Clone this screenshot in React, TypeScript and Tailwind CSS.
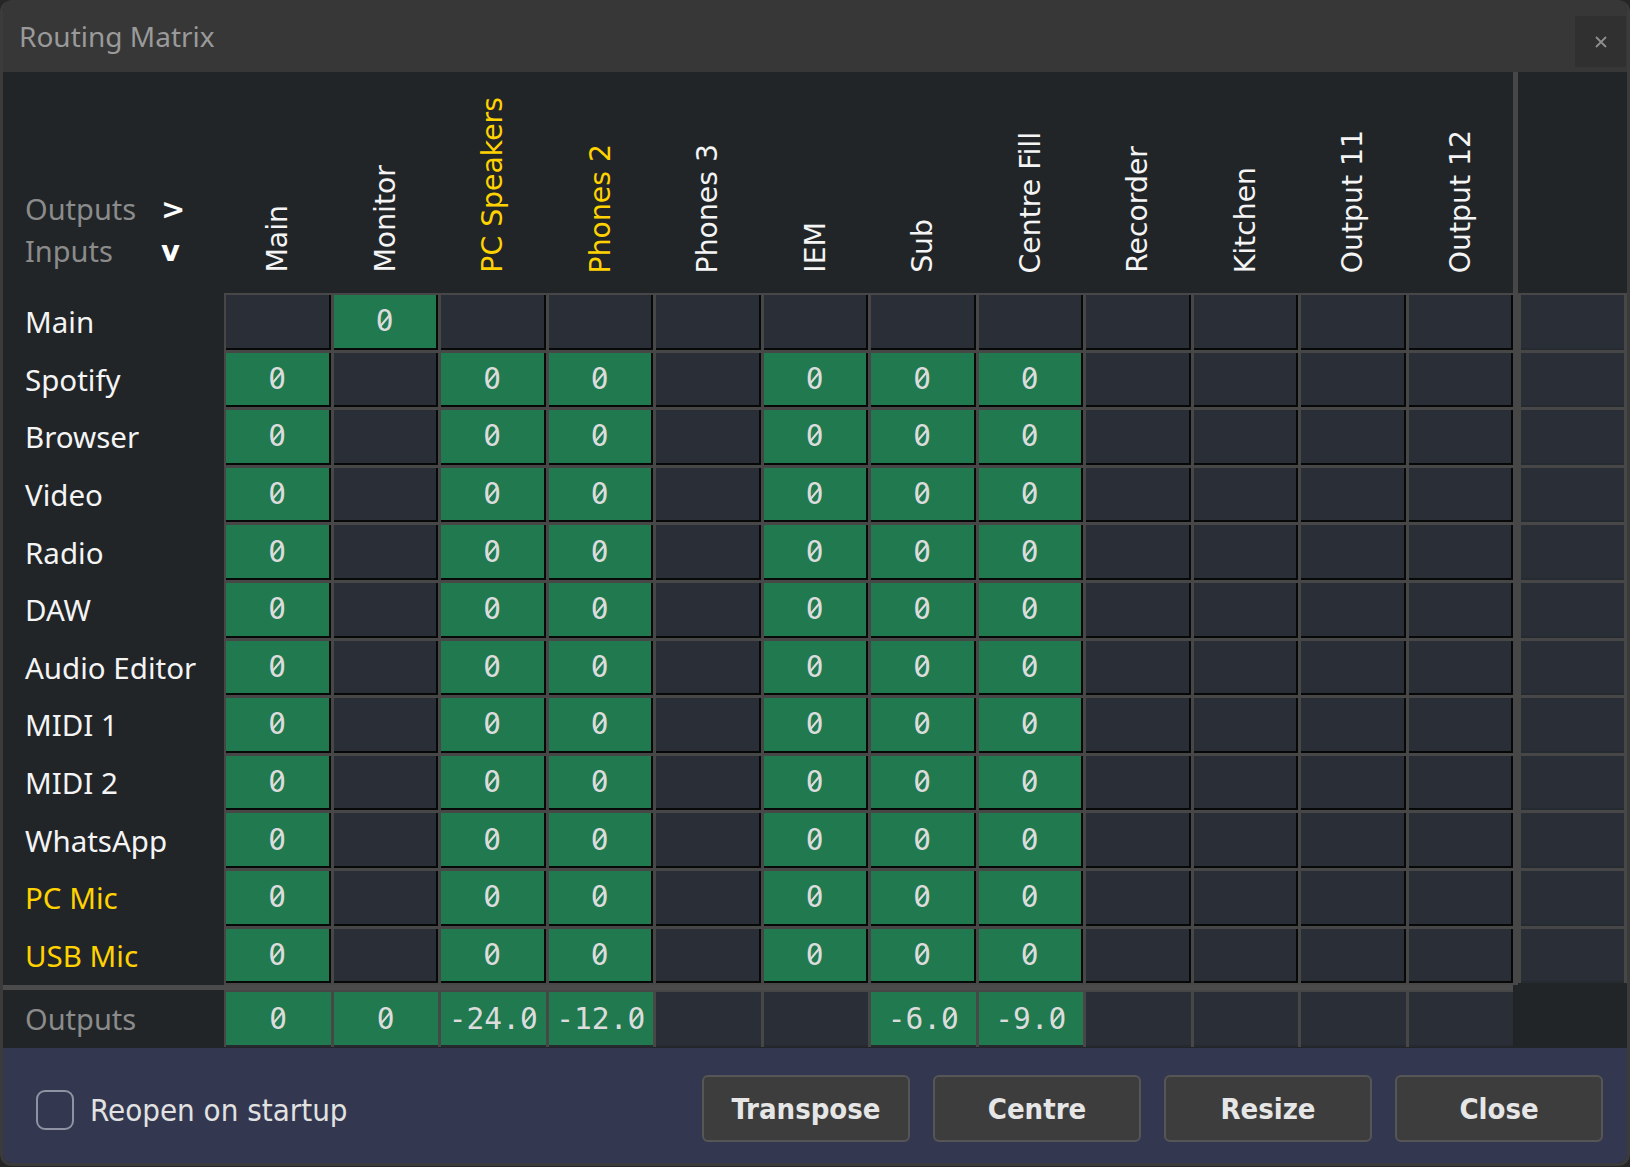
import React from 'react';

type Col = { name: string; hw?: boolean };

const COLS: Col[] = [
  { name: 'Main' },
  { name: 'Monitor' },
  { name: 'PC Speakers', hw: true },
  { name: 'Phones 2', hw: true },
  { name: 'Phones 3' },
  { name: 'IEM' },
  { name: 'Sub' },
  { name: 'Centre Fill' },
  { name: 'Recorder' },
  { name: 'Kitchen' },
  { name: 'Output 11' },
  { name: 'Output 12' },
];

const ROWS: Col[] = [
  { name: 'Main' },
  { name: 'Spotify' },
  { name: 'Browser' },
  { name: 'Video' },
  { name: 'Radio' },
  { name: 'DAW' },
  { name: 'Audio Editor' },
  { name: 'MIDI 1' },
  { name: 'MIDI 2' },
  { name: 'WhatsApp' },
  { name: 'PC Mic', hw: true },
  { name: 'USB Mic', hw: true },
];

// which outputs each input is routed to
const ROUTED = [0, 2, 3, 5, 6, 7];
const OUT_LEVELS = ['0', '0', '-24.0', '-12.0', '', '', '-6.0', '-9.0', '', '', '', ''];

const isRouted = (row: number, col: number) => (row === 0 ? col === 1 : ROUTED.includes(col));

// mono number, zeros drawn slashed like the original
const Num = ({ value }: { value: string }) => (
  <span className="flex font-['DejaVu_Sans_Mono',monospace] text-[29.5px] leading-[34px] text-[#dcdcdc]">
    {value.split('').map((ch, i) =>
      ch === '0' ? (
        <span key={i} className="relative">
          0
          <span className="absolute left-1/2 top-[16.5px] w-[5px] h-[8px] -translate-x-1/2 -translate-y-1/2 bg-[#217a4f]" />
          <span className="absolute left-1/2 top-[16.5px] w-[2.4px] h-[16px] -translate-x-1/2 -translate-y-1/2 rotate-[40deg] bg-[#dcdcdc]" />
        </span>
      ) : (
        <span key={i}>{ch}</span>
      )
    )}
  </span>
);

const MatrixCell = ({ on }: { on: boolean }) => (
  <div
    className={`h-[54.6px] border-b-2 border-r-2 border-[#070808] flex items-center justify-center ${
      on ? 'bg-[#217a4f]' : 'bg-[#2a2e37]'
    }`}
  >
    {on && <Num value="0" />}
  </div>
);

const FooterButton = ({ label }: { label: string }) => (
  <button className="w-[208px] h-[67px] pt-[3px] rounded-[6px] border-2 border-[#565656] bg-[#3d3d3d] text-[#e6e6e6] text-[29px] font-bold font-['DejaVu_Sans_Condensed','DejaVu_Sans',sans-serif]">
    {label}
  </button>
);

export default function App() {
  return (
    <div className="w-[1630px] h-[1167px] bg-[#262626] font-['Noto_Sans',sans-serif]">
      <div className="w-[1630px] h-[1166px] rounded-[12px] overflow-hidden border-x-[3px] border-b-[3px] border-[#3b3b3b] flex flex-col">
        {/* Title bar */}
        <div className="h-[72px] shrink-0 bg-[#373737] flex items-start">
          <div className="pl-[16px] pt-[17px] text-[28px] leading-[38px] text-[#9a9a9a]">Routing Matrix</div>
          <button className="ml-auto mt-[16px] mr-[1px] w-[51px] h-[51px] bg-[#303030] flex items-center justify-center">
            <svg width="12" height="12" viewBox="0 0 12 12">
              <path d="M1 1 L11 11 M11 1 L1 11" stroke="#8e8e8e" strokeWidth="1.8" />
            </svg>
          </button>
        </div>

        {/* Body */}
        <div className="h-[976px] shrink-0 bg-[#212528] flex">
          <div className="w-[1510px] flex flex-col">
            {/* Column headers */}
            <div className="h-[221px] shrink-0 flex">
              <div className="w-[221px] pl-[22px] pt-[116px] text-[29px] leading-[42px] text-[#8b8b8b]">
                <div className="flex">
                  <span className="w-[136px]">Outputs</span>
                  <span className="font-bold font-['DejaVu_Sans',sans-serif] text-white">&gt;</span>
                </div>
                <div className="flex">
                  <span className="w-[136px]">Inputs</span>
                  <span className="font-bold font-['DejaVu_Sans',sans-serif] text-white">v</span>
                </div>
              </div>
              <div className="flex pl-[2px] gap-[3px]">
                {COLS.map((c) => (
                  <div key={c.name} className="w-[104.5px] flex items-end justify-center pb-[20px]">
                    <span
                      className={`[writing-mode:vertical-rl] rotate-180 font-['DejaVu_Sans',sans-serif] text-[28.3px] leading-[30px] whitespace-nowrap ${
                        c.hw ? 'text-[#ffd200]' : 'text-[#f4f4f4]'
                      }`}
                    >
                      {c.name}
                    </span>
                  </div>
                ))}
              </div>
            </div>

            {/* Inputs x outputs */}
            <div className="flex shrink-0">
              <div className="w-[221px] flex flex-col pt-[2px] gap-[3px]">
                {ROWS.map((r) => (
                  <div
                    key={r.name}
                    className={`h-[54.6px] flex items-center pl-[22px] text-[29.5px] ${
                      r.hw ? 'text-[#ffd200]' : 'text-[#f4f4f4]'
                    }`}
                  >
                    {r.name}
                  </div>
                ))}
              </div>
              <div className="grid grid-cols-[repeat(12,104.5px)] gap-[3px] bg-[#474747] pl-[2px] pt-[2px] pb-[2.3px]">
                {ROWS.map((r, ri) => COLS.map((c, ci) => <MatrixCell key={`${r.name}-${c.name}`} on={isRouted(ri, ci)} />))}
              </div>
            </div>

            <div className="h-[5px] shrink-0 bg-[#4b4b4b]" />

            {/* Output levels */}
            <div className="flex h-[57px] shrink-0">
              <div className="w-[221px] flex items-center pl-[22px] text-[29px] text-[#8b8b8b]">Outputs</div>
              <div className="grid grid-cols-[repeat(12,104.5px)] gap-[3px] bg-[#474747] pl-[2px] pt-[2px]">
                {OUT_LEVELS.map((v, i) => (
                  <div
                    key={i}
                    className={`h-[55px] border-b-2 border-[#262a30] flex items-center justify-center ${
                      v ? 'bg-[#217a4f]' : 'bg-[#2a2e37]'
                    }`}
                  >
                    {v && <Num value={v} />}
                  </div>
                ))}
              </div>
            </div>
          </div>

          {/* Splitter */}
          <div className="w-[5px] h-[913px] bg-[#474747]" />

          {/* Next column, partly visible */}
          <div className="flex-1 flex flex-col">
            <div className="h-[221px]" />
            <div className="flex flex-col gap-[3px] bg-[#474747] pt-[2px] pl-[3px] pr-[3px]">
              {ROWS.map((r) => (
                <div key={r.name} className="h-[54.6px] bg-[#2a2e37] border-b-2 border-[#262a31]" />
              ))}
            </div>
          </div>
        </div>

        {/* Footer */}
        <div className="flex-1 bg-[#333850] flex items-center pt-[6px] pl-[33px] pr-[24px]">
          <div className="w-[38px] h-[40px] mt-[2px] rounded-[9px] border-2 border-[#8f92a2]" />
          <span className="ml-[16px] mt-[4px] text-[31px] text-[#e2e2e2] font-['DejaVu_Sans_Condensed','DejaVu_Sans',sans-serif]">
            Reopen on startup
          </span>
          <div className="ml-auto flex gap-[23px]">
            <FooterButton label="Transpose" />
            <FooterButton label="Centre" />
            <FooterButton label="Resize" />
            <FooterButton label="Close" />
          </div>
        </div>
      </div>
    </div>
  );
}
